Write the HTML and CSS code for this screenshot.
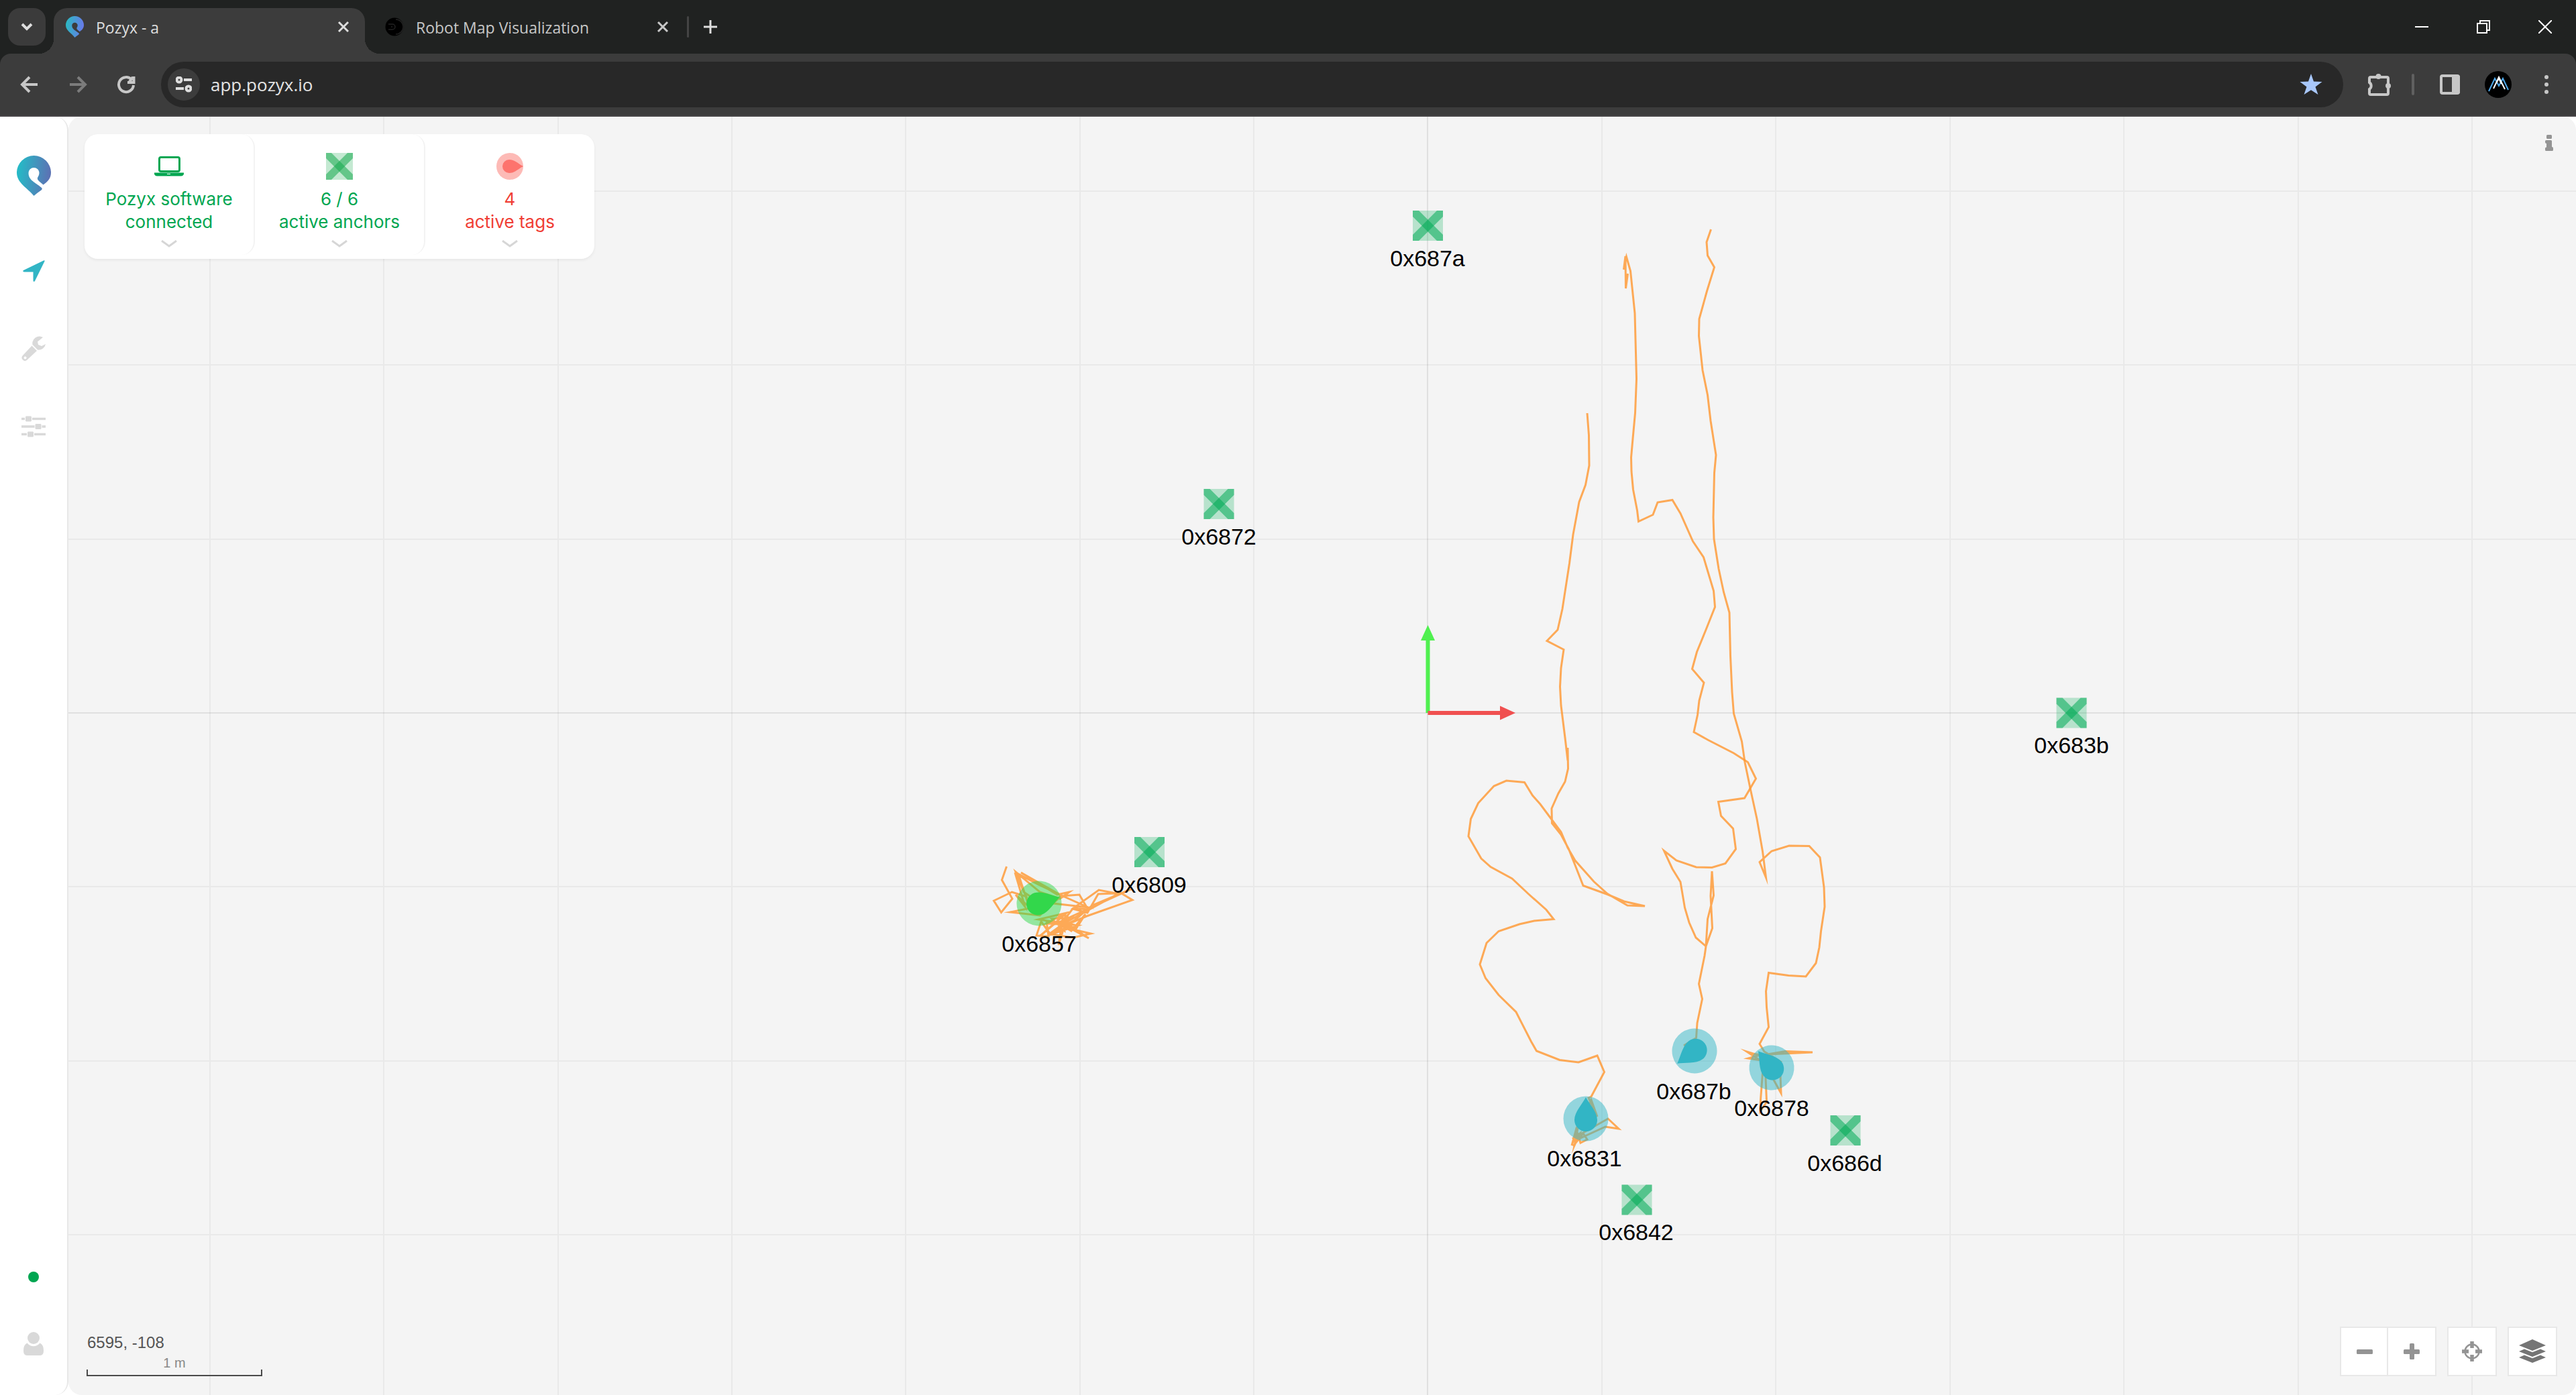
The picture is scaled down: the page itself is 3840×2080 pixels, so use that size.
FILE: index.html
```html
<!DOCTYPE html>
<html lang="en">
<head>
<meta charset="utf-8">
<title>Pozyx - a</title>
<link rel="stylesheet" href="styles.css">
</head>
<body>
<svg class="defs" aria-hidden="true">
  <defs>
    <linearGradient id="brand" x1="0" y1="0" x2="1" y2="0.15"><stop offset="0.1" stop-color="#26b9c6"/><stop offset="1" stop-color="#5b73b4"/></linearGradient>
    <linearGradient id="brand-tab" x1="0" y1="0" x2="1" y2="0.15"><stop offset="0" stop-color="#27bdbf"/><stop offset="1" stop-color="#677be8"/></linearGradient>
    <path id="pin" d="M25.500 60C17 49 0 41 0 25.500A25.500 25.500 0 0 1 51 25.500C51 34 46 39 39.500 43.500C34 39 29 36 31.500 32Q33.500 29 33.500 26A8 8 0 0 0 17.500 26C17.500 37 28 40 36.500 47.500Q39 49.500 36.500 51.500Q30 56 25.500 60Z"/>
    <g id="anchor">
      <path fill-opacity=".25" d="M-22.500-22.500h45v45h-45z"/>
      <path fill-opacity=".54" d="M-22.500-22.500h9L22.500 13.500v9h-9L-22.500-13.500z"/>
      <path fill-opacity=".54" d="M22.500-22.500h-9L-22.500 13.500v9h9L22.500-13.500z"/>
    </g>
    <g id="tag">
      <circle r="33.500" fill-opacity=".5"/>
      <path d="M0-32C5-22 17-10 17 2A17 17 0 0 1-17 2C-17-10-5-22 0-32Z"/>
    </g>
  </defs>
</svg>

<header class="browser">
  <div class="tabstrip">
    <button class="tab-search" aria-label="Search tabs"><svg width="20" height="12" viewBox="0 0 20 12"><path d="M3 2l7 7 7-7" class="line bold"/></svg></button>
    <div class="tab active">
      <svg width="27" height="32" viewBox="0 0 51 60"><use href="#pin" fill="url(#brand-tab)"/></svg>
      <span class="tab-title">Pozyx - a</span>
      <button aria-label="Close tab"><svg width="18" height="18" viewBox="0 0 18 18"><path d="M2 2l14 14M16 2L2 16" class="line"/></svg></button>
    </div>
    <div class="tab">
      <svg width="28" height="28" viewBox="0 0 28 28"><circle cx="14" cy="14" r="13.500"/><path d="M16 3a11 11 0 0 1 0 22M5 10h6a4 4 0 0 1 0 8H5M9 14h2" fill="none" stroke="#222" stroke-width="1.500"/></svg>
      <span class="tab-title">Robot Map Visualization</span>
      <button aria-label="Close tab"><svg width="18" height="18" viewBox="0 0 18 18"><path d="M2 2l14 14M16 2L2 16" class="line"/></svg></button>
    </div>
    <span class="tab-divider"></span>
    <button class="new-tab" aria-label="New tab"><svg width="20" height="20" viewBox="0 0 20 20"><path d="M10 0v20M0 10h20" class="line"/></svg></button>
    <div class="window-buttons">
      <button aria-label="Minimize"><svg width="20" height="20" viewBox="0 0 20 20"><path d="M0 10h20" class="line thin"/></svg></button>
      <button aria-label="Restore"><svg width="20" height="20" viewBox="0 0 20 20"><path d="M1 5h14v14H1zM5 5V1h14v14h-4" class="line thin"/></svg></button>
      <button aria-label="Close"><svg width="20" height="20" viewBox="0 0 20 20"><path d="M0 0l20 20M20 0L0 20" class="line thin"/></svg></button>
    </div>
  </div>
  <div class="toolbar">
    <button aria-label="Back"><svg width="28" height="28" viewBox="0 0 28 28"><path d="M26 14H4M14 3L3 14l11 11" class="line bold"/></svg></button>
    <button class="dim" aria-label="Forward"><svg width="28" height="28" viewBox="0 0 28 28"><path d="M2 14h22M14 3l11 11-11 11" class="line bold"/></svg></button>
    <button aria-label="Reload"><svg width="28" height="28" viewBox="0 0 28 28"><path d="M25 15A11 11 0 1 1 22 6.500M25.500 2v9H16M24 3l-5 7" class="line bold"/></svg></button>
    <div class="omnibox">
      <button class="site-info" aria-label="View site information"><svg width="24" height="24" viewBox="0 0 24 24"><g class="line bold"><circle cx="5" cy="5" r="3.500"/><path d="M12 5h12M0 18h12"/><circle cx="19" cy="18" r="3.500"/></g></svg></button>
      <input class="url" type="text" value="app.pozyx.io" aria-label="Address">
      <button aria-label="Bookmark"><svg width="34" height="34" viewBox="0 0 34 34"><path fill="#a8c7fa" d="M17 1l4 11.500 12.500.4-10 7.600L27.500 32 17 25.200 6.500 32l4-11.500-10-7.600L13 12.500z"/></svg></button>
    </div>
    <div class="extensions">
      <button aria-label="Extensions"><svg width="34" height="36" viewBox="0 0 34 36"><path d="M4 7h24q2 0 2 2v22q0 2-2 2H4q-2 0-2-2v-6a6 6 0 0 0 0-10V9q0-2 2-2z" class="line bold"/><circle cx="15.500" cy="6" r="4" fill="#c7c7c7"/><circle cx="30" cy="20" r="4" fill="#c7c7c7"/></svg></button>
      <span class="toolbar-divider"></span>
      <button aria-label="Side panel"><svg width="30" height="30" viewBox="0 0 30 30"><rect x="2" y="2" width="26" height="26" rx="2" class="line bold"/><path d="M18 1h9q3 0 3 3v22q0 3-3 3h-9z" fill="#c7c7c7"/></svg></button>
      <button aria-label="Profile"><svg width="40" height="40" viewBox="0 0 40 40"><circle cx="20" cy="20" r="20"/><path d="M6 30l9-19 6 11 6-11 8 17" fill="none" stroke="#4ea8ea" stroke-width="2"/><path d="M13 26l8-17 9 18M17 18l4-7 4 8" fill="none" stroke="#fff" stroke-width="2"/></svg></button>
      <button aria-label="Menu"><svg width="8" height="30" viewBox="0 0 8 30" fill="#c7c7c7"><circle cx="4" cy="4" r="3"/><circle cx="4" cy="15" r="3"/><circle cx="4" cy="26" r="3"/></svg></button>
    </div>
  </div>
</header>

<div class="app">
  <nav class="sidebar">
    <a class="logo" href="#" aria-label="Home"><svg width="51" height="60" viewBox="0 0 51 60"><use href="#pin" fill="url(#brand)"/></svg></a>
    <a href="#" aria-label="Tracking"><svg width="36" height="36" viewBox="0 0 36 36"><path fill="#32b5c5" d="M33 2.500Q35 1.500 34.500 3.500L20 33Q18 35 17.500 32.500V19.500H4Q1 18.500 3 17Z"/></svg></a>
    <a href="#" aria-label="Tools"><svg width="38" height="38" viewBox="0 0 38 38"><path fill="#d9d9d9" fill-rule="evenodd" d="M16.500 14.500L24 22 9 36Q6 38.500 3 35.500 0 33 2.500 29.500ZM6.500 30.500a2 2 0 1 0 .1 0z"/><path fill="#d9d9d9" d="M33 2A10.500 10.500 0 0 0 17.500 13L25 20.500A10.500 10.500 0 0 0 37 12L31 15 26 13 25 8.500Z"/></svg></a>
    <a href="#" aria-label="Settings"><svg width="36" height="34" viewBox="0 0 36 34"><path d="M0 5.500h36M0 17h36M0 28.500h36" stroke="#d9d9d9" stroke-width="3.500"/><g fill="#d9d9d9" stroke="#fff" stroke-width="1"><rect x="5.500" y="1" width="10" height="9" rx="2"/><rect x="20" y="12.500" width="10" height="9" rx="2"/><rect x="8.500" y="24" width="10" height="9" rx="2"/></g></svg></a>
    <span class="online"></span>
    <a class="account" href="#" aria-label="Account"><svg width="30" height="36" viewBox="0 0 30 36" fill="#d9d9d9"><circle cx="15" cy="9" r="9"/><path d="M5.500 16.500a12 12 0 0 0 19 0Q30 19 30 28 30 35 25 35H5Q0 35 0 28 0 19 5.500 16.500z"/></svg></a>
  </nav>

  <main class="map">
    <svg class="canvas" viewBox="102 174 3738 1906" preserveAspectRatio="xMinYMin slice" role="img" aria-label="Map of anchors and tags">
      <path class="grid" d="M313 174v1906M572 174v1906M832 174v1906M1091 174v1906M1350 174v1906M1610 174v1906M1869 174v1906M2388 174v1906M2647 174v1906M2907 174v1906M3166 174v1906M3426 174v1906M3685 174v1906M102 285h3738M102 544h3738M102 804h3738M102 1322h3738M102 1582h3738M102 1841h3738"/>
      <path class="grid axis" d="M2128 174v1906M102 1063h3738"/>
      <path stroke="#50f050" stroke-width="6" d="M2128.500 1063V954"/><path fill="#50f050" d="M2118 955h21l-10.500-23z"/>
      <path stroke="#f05050" stroke-width="6" d="M2128.500 1063H2237"/><path fill="#f05050" d="M2236 1052.500v21l23-10.500z"/>

      <g fill="#00aa55">
        <use href="#anchor" x="2128.500" y="336.500"/><use href="#anchor" x="1817" y="751.500"/><use href="#anchor" x="3088" y="1063"/>
        <use href="#anchor" x="1713.500" y="1270.500"/><use href="#anchor" x="2751" y="1685.500"/><use href="#anchor" x="2440" y="1789"/>
      </g>

      <g class="trail">
        <path d="M2366 616L2368.500 649 2369 694 2363.500 723 2354 748.500 2345 797 2339.500 840 2329 908 2322 939 2306 955.500 2331 968.500 2327 996 2325.500 1024 2327 1052 2333 1100 2337 1134 2337 1115 2337.500 1146 2333 1165.500 2323 1183 2313 1205.500 2313.500 1227.500 2327 1244.500 2338.500 1266 2348 1290 2360 1320.500 2396 1333.500 2421 1344 2452 1351 2426 1350 2396 1332.500 2376 1314.500 2348 1283 2337 1264 2327 1240.500 2313.500 1222.500 2296 1199 2284.500 1186 2272.500 1166.500 2245.500 1164 2227 1172 2203.500 1197.500 2192.500 1221 2189 1247 2208 1280 2222 1292.500 2254 1310 2278 1332.500 2305 1356.500 2316 1370.500 2287 1373 2265 1378 2234 1388.500 2216 1406 2206 1438 2214.500 1458.500 2234 1483.500 2260 1509 2282.500 1553 2290.500 1567 2325 1580.500 2353 1584 2381 1574 2391.500 1598.500 2372 1635 2368 1637 2381 1665 2372 1640 2350 1682 2343 1708 2352 1682 2347 1708 2355 1690 2344 1698 2397 1668 2413 1683 2393 1680 2345 1702 2350 1685 2356 1704 2366 1699 2360 1690 2345 1709"/>
        <path d="M2426.500 408L2423.500 430 2423 382 2420.500 402 2424.500 383 2430.500 404 2437 467 2439.500 565 2437.500 616 2434 654 2431.500 682 2432 703 2434.500 730 2440.500 761 2442.500 777.500 2464 767.500 2471 749 2493 745.500 2505 765.500 2523.500 807 2539.500 831 2554.500 881 2556.500 905 2543 939 2529.500 972 2522.500 997.500 2540 1018 2533 1044.500 2530.500 1066 2525 1091.500 2546.500 1103.500 2584.500 1123 2605.500 1136.500 2617.500 1161 2600.500 1190 2561.500 1195.500 2565.500 1216.500 2583.500 1235.500 2587.500 1266 2572 1287.500 2552 1293.500 2528.500 1293 2499 1283 2480.500 1268.500 2493 1295.500 2505 1315 2511.500 1353.500 2518 1375.500 2528 1398 2543 1411 2552.500 1384 2550 1336 2552 1299 2554.500 1335 2545.500 1370.500 2543 1411 2541 1425 2532.500 1467 2537.500 1489.500 2530 1525.500 2528.500 1547.500 2510 1559"/>
        <path d="M2550.500 342L2544 361 2545.500 381 2555.500 398.500 2544.500 434 2533 475.500 2532.500 501 2538 552 2545.500 589 2550 627.500 2558 678.500 2555.500 705 2554 771.500 2555 803.500 2562 848 2569.500 883 2578 913.500 2579.500 978 2582 1032 2584.500 1064 2596.500 1105.500 2601 1136.500 2609.500 1177.500 2619 1221 2627.500 1269.500 2632.500 1308.500 2623 1285.500 2641 1269 2667 1261 2697 1261.500 2713 1278.500 2719 1323 2720 1352 2714.500 1388.500 2712 1412.500 2707 1436 2692 1456 2666 1454.500 2636.500 1450.500 2632.500 1478 2633.500 1502 2636.500 1531.500 2623 1556.500 2630 1568 2656 1584 2636.500 1572 2702 1569 2661.500 1567.500 2623 1574 2604 1568 2622 1580 2608 1570 2624 1573 2606 1578 2626 1581 2627.500 1600 2624.500 1640 2624 1657 2633.500 1643 2632 1607 2640 1603 2655 1630 2654 1603"/>
        <path d="M1500.500 1292L1493.500 1312 1509 1340 1492.500 1360.500 1481.500 1343 1508.500 1330 1530 1337 1513 1301 1528 1352 1514 1334 1534 1352 1518 1303 1548 1319 1582 1335 1622 1353 1570 1347 1582 1335 1522 1301 1576 1334 1594 1330 1580 1340 1550 1330 1514 1300 1526 1330 1556 1350 1506 1360 1550 1365 1582 1336 1609 1334 1622 1356 1600 1354 1638 1327 1664 1332 1637 1333 1621 1361 1599 1355 1580 1380 1670 1331 1688 1342 1620 1366 1575 1385 1602 1372 1628 1350 1688 1325 1570 1379 1551 1395 1590 1361 1548 1371 1602 1379 1560 1377 1588 1362 1587 1388 1568 1370 1598 1368 1565 1392 1552 1374 1545 1395 1563 1396 1560 1374 1607 1380 1564 1394 1588 1383 1626 1392 1600 1398 1567 1393 1590 1377 1623 1399 1576 1374 1604 1385 1618 1363 1597 1388 1580 1378 1592 1364 1578 1409 1584 1370"/>
      </g>

      <use href="#tag" fill="#32d74b" transform="translate(1549 1347) rotate(73)"/>
      <use href="#tag" fill="#32b5c5" transform="translate(2364 1668)"/>
      <use href="#tag" fill="#32b5c5" transform="translate(2526 1567) rotate(-126)"/>
      <use href="#tag" fill="#32b5c5" transform="translate(2641 1592) rotate(-39)"/>

      <g class="labels">
        <text x="2128" y="397">0x687a</text><text x="1817" y="812">0x6872</text><text x="3088" y="1123">0x683b</text>
        <text x="1713" y="1331">0x6809</text><text x="1549" y="1419">0x6857</text><text x="2525" y="1639">0x687b</text>
        <text x="2641" y="1664">0x6878</text><text x="2362" y="1739">0x6831</text><text x="2750" y="1746">0x686d</text><text x="2439" y="1849">0x6842</text>
      </g>
    </svg>

    <section class="status">
      <button class="good">
        <span class="status-icon"><svg width="44" height="30" viewBox="0 0 44 30"><rect x="7.500" y="1.500" width="30" height="21" rx="2.500" fill="none" stroke="#00a651" stroke-width="3"/><path fill="#00a651" d="M0 24.500h44v2q-1 3-4 3H4q-3 0-4-3z"/><path d="M19 26.500h5" stroke="#fff"/></svg></span>
        <span class="status-text">Pozyx software<br>connected</span>
        <svg class="chevron" width="24" height="12" viewBox="0 0 24 12"><path d="M1 1l11 8 11-8"/></svg>
      </button>
      <button class="good">
        <span class="status-icon"><svg width="40" height="40" viewBox="-22.500 -22.500 45 45" fill="#12a94c"><use href="#anchor"/></svg></span>
        <span class="status-text">6 / 6<br>active anchors</span>
        <svg class="chevron" width="24" height="12" viewBox="0 0 24 12"><path d="M1 1l11 8 11-8"/></svg>
      </button>
      <button class="bad">
        <span class="status-icon"><svg width="40" height="40" viewBox="0 0 40 40"><circle cx="20" cy="20" r="20" fill="#fdbab6"/><path fill="#fd736d" d="M40 20C33 23 28 30 19 30A10 10 0 0 1 19 10C28 10 33 17 40 20z"/></svg></span>
        <span class="status-text">4<br>active tags</span>
        <svg class="chevron" width="24" height="12" viewBox="0 0 24 12"><path d="M1 1l11 8 11-8"/></svg>
      </button>
    </section>

    <button class="info" aria-label="Information"><svg width="12" height="24" viewBox="0 0 12 24" fill="#949494"><rect x="2" width="8" height="6" rx="1.500"/><path d="M1.500 8H8.500Q10 8 10 9.500V18Q12 18 12 20V22.500Q12 24 10.500 24H1.500Q0 24 0 22.500V20Q0 18.500 2 18.500V13Q0 13 0 11V9.500Q0 8 1.500 8z"/></svg></button>

    <div class="scale">
      <output class="coords">6595, -108</output>
      <span class="scale-label">1 m</span>
      <span class="scale-bar"></span>
    </div>

    <div class="controls">
      <div class="zoom">
        <button aria-label="Zoom out"><svg width="24" height="24" viewBox="0 0 24 24"><rect y="9" width="24" height="7" rx="1.500" fill="#949494"/></svg></button>
        <button aria-label="Zoom in"><svg width="24" height="24" viewBox="0 0 24 24" fill="#949494"><rect y="9" width="24" height="7" rx="1.500"/><rect x="9" width="7" height="24" rx="1.500"/></svg></button>
      </div>
      <button aria-label="Center map"><svg width="32" height="32" viewBox="0 0 32 32"><circle cx="16" cy="16" r="10.500" fill="none" stroke="#949494" stroke-width="2.500"/><path d="M16 1v10M16 21v10M1 16h10M21 16h10" stroke="#949494" stroke-width="5.500" stroke-linecap="butt"/></svg></button>
      <button aria-label="Layers"><svg width="40" height="36" viewBox="0 0 40 36" fill="#757575"><path d="M20 0l20 9-20 8L0 9zM8 14.500l12 4.800 12-4.800 8 3.500-20 8-20-8zM8 23.500l12 4.800 12-4.800 8 3.500-20 8-20-8z"/></svg></button>
    </div>
  </main>
</div>
</body>
</html>
```
FILE: styles.css
```css
* { box-sizing: border-box; }

body {
  margin: 0;
  min-height: 100vh;
  display: flex;
  flex-direction: column;
  background: #fff;
  font-family: Inter, "Liberation Sans", sans-serif;
}

button {
  margin: 0;
  padding: 0;
  border: 0;
  background: none;
  color: inherit;
  font: inherit;
  display: flex;
  align-items: center;
  justify-content: center;
}

svg { display: block; flex: none; }
.defs { position: absolute; width: 0; height: 0; }

.line { fill: none; stroke: currentColor; stroke-width: 3; }
.line.bold { stroke-width: 4; }
.line.thin { stroke-width: 2; }

/* Browser chrome */
.browser { background: #202221; color: #dedede; font-family: "Open Sans", "Noto Sans", sans-serif; }

.tabstrip { display: flex; align-items: center; height: 80px; padding-left: 12px; }
.tab-search { width: 56px; height: 56px; margin-right: 12px; border-radius: 18px; background: #3b3b3b; }

.tab {
  display: flex;
  align-items: center;
  gap: 18px;
  width: 464px;
  height: 68px;
  align-self: flex-end;
  padding: 0 23px 12px 18px;
  color: #c7c7c7;
  font-size: 23px;
}
.tab + .tab { padding-left: 30px; padding-right: 11px; }
.tab.active {
  position: relative;
  background: #3c3c3c;
  border-radius: 20px 20px 0 0;
  color: #dedede;
}
.tab.active::before, .tab.active::after {
  content: "";
  position: absolute;
  bottom: 0;
  width: 22px;
  height: 22px;
}
.tab.active::before { right: 100%; background: radial-gradient(circle at 0 0, transparent 22px, #3c3c3c 22px); }
.tab.active::after { left: 100%; background: radial-gradient(circle at 100% 0, transparent 22px, #3c3c3c 22px); }
.tab-title { flex: 1; padding-top: 2px; white-space: nowrap; }
.tab-divider { width: 3px; height: 32px; margin-left: 16px; border-radius: 2px; background: #444; }
.new-tab { width: 64px; height: 56px; }
.window-buttons { display: flex; margin-left: auto; color: #fff; }
.window-buttons button { width: 92px; height: 80px; }

.toolbar {
  display: flex;
  align-items: center;
  height: 94px;
  padding: 0 40px 0 8px;
  background: #3c3c3c;
  border-bottom: 2px solid #484648;
  border-radius: 16px 16px 0 0;
  color: #c7c7c7;
}
.toolbar > button { width: 72px; height: 68px; }
.toolbar .dim { color: #7c7c7c; }
.omnibox {
  flex: 1;
  display: flex;
  align-items: center;
  height: 68px;
  margin-left: 16px;
  padding: 0 31px 0 10px;
  border-radius: 34px;
  background: #282828;
}
.site-info { width: 48px; height: 48px; border-radius: 24px; background: #3c3c3c; color: #dedede; }
.url {
  flex: 1;
  min-width: 0;
  margin-left: 16px;
  padding: 0;
  border: 0;
  background: none;
  color: #e3e3e3;
  font: 26px/40px "Open Sans", "Noto Sans", sans-serif;
}
.extensions { display: flex; align-items: center; gap: 37px; padding-left: 37px; }
.extensions button:last-child { padding: 0 0 0 11px; }
.toolbar-divider { width: 4px; height: 32px; margin: 0 1px 0 -6px; border-radius: 2px; background: #606060; }

/* App shell */
.app { flex: 1; display: flex; }

.sidebar {
  flex: none;
  display: flex;
  flex-direction: column;
  align-items: center;
  width: 102px;
  padding: 58px 0;
  border-right: 2px solid #e8e8e8;
  border-radius: 0 20px 20px 0;
}
.sidebar a { display: flex; align-items: center; justify-content: center; width: 60px; height: 60px; margin-bottom: 56px; }
.sidebar .logo { margin-bottom: 82px; }
.online { width: 16px; height: 16px; margin-top: auto; margin-bottom: 74px; border-radius: 8px; background: #00a651; }
.sidebar .account { height: 36px; margin-bottom: 0; }

.map { position: relative; flex: 1; overflow: hidden; border-radius: 20px; background: #f4f4f4; }
.canvas { position: absolute; inset: 0; width: 100%; height: 100%; }
.grid { fill: none; stroke: #000; stroke-opacity: .045; stroke-width: 2; }
.grid.axis { stroke-opacity: .08; }
.trail { fill: none; stroke: #ff9933; stroke-opacity: .82; stroke-width: 3; stroke-miterlimit: 10; }
.labels { font: 34px "Liberation Sans", Arial, sans-serif; text-anchor: middle; }

/* Panels over the map */
.status {
  position: absolute;
  top: 26px;
  left: 24px;
  display: flex;
  padding-bottom: 6px;
  border-radius: 20px;
  background: #fff;
  box-shadow: 0 2px 4px rgba(0, 0, 0, .06);
}
.status button {
  flex-direction: column;
  justify-content: flex-start;
  width: 254px;
  height: 180px;
  padding-top: 28px;
  border-right: 2px solid #f3f3f3;
  border-radius: 20px;
}
.status button:last-child { width: 252px; border-right: 0; }
.status-icon { display: flex; align-items: center; height: 40px; margin-bottom: 12px; }
.status-text { font-size: 26px; line-height: 34px; text-align: center; white-space: nowrap; }
.chevron { margin-top: 10px; fill: none; stroke: #d6d6d6; stroke-width: 3; }
.good { color: #00a651; }
.bad { color: #f03e35; }

.info { position: absolute; top: 27px; right: 34px; }

.scale {
  position: absolute;
  left: 27px;
  bottom: 28px;
  display: flex;
  flex-direction: column;
  width: 262px;
  color: #555;
  font: 24px/28px "Liberation Sans", Arial, sans-serif;
}
.coords { display: block; padding-left: 1px; }
.scale-label { margin-top: 4px; color: #888; font-size: 20px; line-height: 24px; text-align: center; }
.scale-bar { height: 10px; margin-top: -2px; border: 2px solid #4a4a4a; border-top: 0; }

.controls { position: absolute; right: 28px; bottom: 28px; display: flex; gap: 16px; }
.zoom { display: flex; }
.controls button { width: 74px; height: 74px; border: 2px solid #e8e8e8; background: #fff; }
.zoom button + button { margin-left: -4px; }
```
